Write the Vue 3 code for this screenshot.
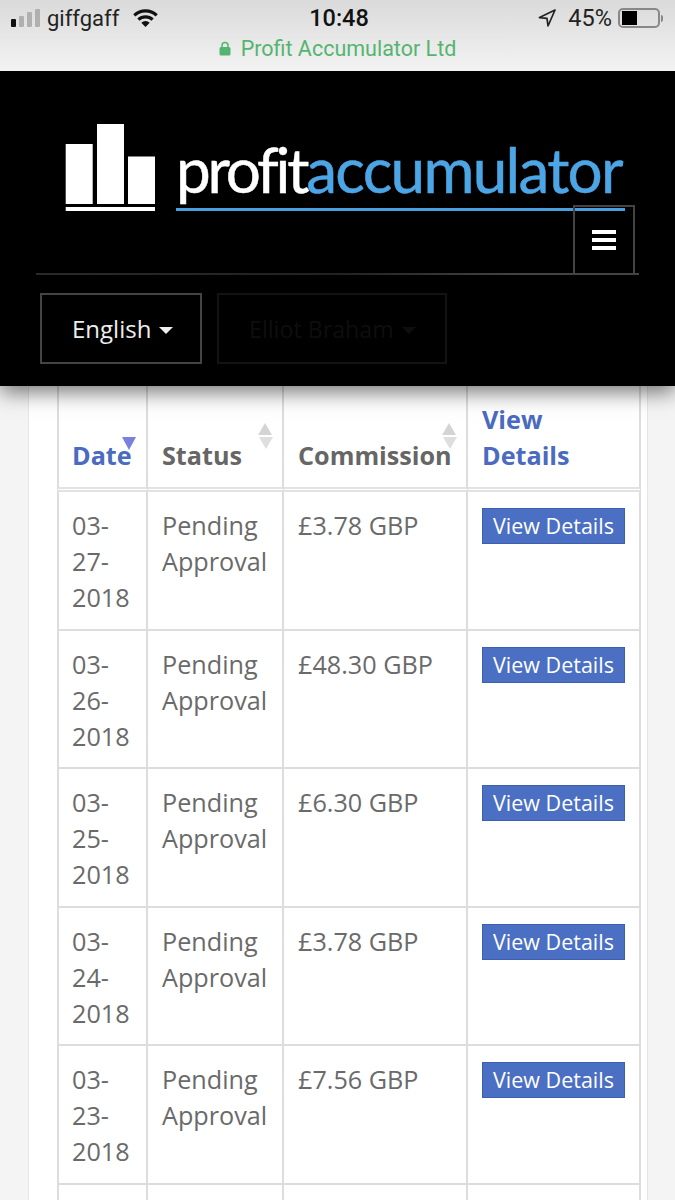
<script setup>
const rows = [
  { date: ['03-', '27-', '2018'], amount: '£3.78 GBP' },
  { date: ['03-', '26-', '2018'], amount: '£48.30 GBP' },
  { date: ['03-', '25-', '2018'], amount: '£6.30 GBP' },
  { date: ['03-', '24-', '2018'], amount: '£3.78 GBP' },
  { date: ['03-', '23-', '2018'], amount: '£7.56 GBP' }
];
</script>

<template>
  <div class="page">
    <div class="ios-bar">
      <div class="status">
        <div class="status-left">
          <span class="signal">
            <i class="on b1"></i>
            <i class="b2"></i>
            <i class="b3"></i>
            <i class="b4"></i>
          </span>
          <span class="carrier">giffgaff</span>
          <svg class="wifi" width="25" height="18" viewBox="0 0 25 18">
            <path d="M1.300 6.300A16.500 16.500 0 0 1 23.700 6.300" fill="none" stroke="#111" stroke-width="3.200" />
            <path d="M5.400 10.700A10.300 10.300 0 0 1 19.600 10.700" fill="none" stroke="#111" stroke-width="3.200" />
            <path d="M12.500 18 8.300 13.800A6 6 0 0 1 16.700 13.800z" fill="#111" />
          </svg>
        </div>
        <div class="clock">10:48</div>
        <div class="status-right">
          <svg class="arrow" width="18" height="18" viewBox="0 0 18 18">
            <path d="M17 1 1.500 8.600 9 9.400 10 17z" fill="none" stroke="#222" stroke-width="1.700" stroke-linejoin="round" />
          </svg>
          <span class="pct">45%</span>
          <span class="battery"><i></i></span>
          <span class="nub"></span>
        </div>
      </div>
      <div class="site">
        <svg width="12" height="15" viewBox="0 0 12 15">
          <path d="M3 7V4.500a3 3 0 0 1 6 0V7" fill="none" stroke="#55b570" stroke-width="1.500" />
          <rect x="0.500" y="6" width="11" height="8.500" rx="1.500" fill="#55b570" />
        </svg>
        <span>Profit Accumulator Ltd</span>
      </div>
    </div>

    <header class="top">
      <div class="logo">
        <svg class="bars" width="92" height="90" viewBox="0 0 92 90">
          <rect x="0.700" y="21" width="27" height="60" fill="#fff" />
          <rect x="32" y="1" width="27" height="80" fill="#fff" />
          <rect x="63" y="33.500" width="27" height="47.500" fill="#fff" />
          <rect x="0.700" y="84" width="89.300" height="4" fill="#fff" />
        </svg>
        <div class="wordmark">
          <div class="word"><span class="w1">profit</span><span class="w2">accumulator</span></div>
          <div class="underline"></div>
        </div>
      </div>
      <button class="burger" aria-label="Menu"><i></i><i></i><i></i></button>
      <div class="rule"></div>
      <div class="menus">
        <div class="menu lang">English <span class="caret"></span></div>
        <div class="menu user">Elliot Braham <span class="caret dark"></span></div>
      </div>
    </header>

    <main class="content">
      <div class="card">
        <table>
          <colgroup>
            <col class="c1" />
            <col class="c2" />
            <col class="c3" />
            <col class="c4" />
          </colgroup>
          <thead>
            <tr>
              <th class="active">Date<span class="sort-down"></span></th>
              <th>Status<span class="sort"></span></th>
              <th>Commission<span class="sort"></span></th>
              <th class="active wrap">View Details</th>
            </tr>
          </thead>
          <tbody>
            <tr v-for="row in rows" :key="row.date.join('')">
              <td><div v-for="part in row.date" :key="part">{{ part }}</div></td>
              <td>Pending Approval</td>
              <td>{{ row.amount }}</td>
              <td><a class="btn">View Details</a></td>
            </tr>
            <tr class="cut">
              <td></td><td></td><td></td><td></td>
            </tr>
          </tbody>
        </table>
      </div>
    </main>
  </div>
</template>

<style>
html, body {
  margin: 0;
  background: #f4f4f4;
}
</style>

<style scoped>
.page {
  width: 675px;
  height: 1200px;
  overflow: hidden;
  font-family: 'Open Sans', sans-serif;
  background: #f4f4f4;
}

.ios-bar {
  position: relative;
  z-index: 3;
  height: 71px;
  box-sizing: border-box;
  background: linear-gradient(#dadada, #f3f3f3);
  font-family: Roboto, 'Liberation Sans', sans-serif;
}

.status {
  display: grid;
  grid-template-columns: 1fr auto 1fr;
  align-items: center;
  height: 36px;
  padding: 0 12px 0 11px;
}

.status-left, .status-right {
  display: flex;
  align-items: center;
}

.status-right {
  justify-content: flex-end;
}

.signal {
  display: flex;
  align-items: flex-end;
  gap: 3px;
  height: 18px;
  margin-right: 7px;
}

.signal i {
  width: 5px;
  border-radius: 1px;
  background: #b0b0b0;
}

.signal i.on {
  background: #111;
}

.b1 { height: 8px; }
.b2 { height: 11px; }
.b3 { height: 15px; }
.b4 { height: 18px; }

.carrier {
  font-size: 22px;
  color: #222;
  margin-right: 14px;
}

.clock {
  padding-left: 4px;
  font-size: 23.5px;
  font-weight: 500;
  color: #111;
}

.arrow {
  margin-right: 12px;
}

.pct {
  font-size: 23.5px;
  color: #222;
  margin-right: 6px;
}

.battery {
  display: block;
  width: 42px;
  height: 20px;
  box-sizing: border-box;
  border: 2px solid #888;
  border-radius: 5px;
  padding: 1px 2px;
}

.battery i {
  display: block;
  width: 15px;
  height: 14px;
  background: #000;
}

.nub {
  width: 2px;
  height: 7px;
  margin-left: 1px;
  background: #888;
  border-radius: 0 2px 2px 0;
}

.site {
  display: flex;
  justify-content: center;
  align-items: center;
  gap: 10px;
  font-size: 21.5px;
  color: #55b570;
}

.top {
  position: relative;
  z-index: 2;
  height: 315px;
  box-sizing: border-box;
  padding: 52px 36px 0 40px;
  background: #000;
  box-shadow: 0 6px 20px rgba(0, 0, 0, 0.55);
}

.logo {
  display: flex;
  align-items: flex-start;
  margin-left: 25px;
}

.wordmark {
  margin-left: 19px;
  margin-top: 15px;
  width: 449px;
}

.word {
  font-family: Lato, sans-serif;
  font-size: 62px;
  line-height: 62px;
  white-space: nowrap;
  font-variant-ligatures: none;
  -webkit-text-stroke: 0.5px currentColor;
}

.w1 {
  color: #fff;
  letter-spacing: -3.2px;
}

.w2 {
  color: #4ca6e6;
  letter-spacing: -1.7px;
}

.underline {
  height: 3px;
  margin-top: 8px;
  background: #4a9fdf;
}

.burger {
  position: absolute;
  left: 573px;
  top: 134px;
  width: 62px;
  height: 70px;
  box-sizing: border-box;
  padding: 0;
  border: 2px solid #444;
  background: transparent;
  display: flex;
  flex-direction: column;
  align-items: center;
  justify-content: center;
  gap: 4px;
}

.burger i {
  display: block;
  width: 24px;
  height: 4px;
  background: #fff;
}

.rule {
  height: 2px;
  margin: 60px 0 0 -4px;
  background: linear-gradient(90deg, #2a2a2a, #222 50%, #444 80%);
}

.menus {
  display: flex;
  gap: 15px;
  margin-top: 18px;
}

.menu {
  height: 71px;
  box-sizing: border-box;
  display: flex;
  align-items: center;
  gap: 8px;
  font-size: 24px;
  border: 2px solid #444;
}

.lang {
  width: 162px;
  padding-left: 30px;
  color: #eee;
}

.user {
  width: 230px;
  padding-left: 30px;
  font-size: 23.2px;
  color: #0e0e0e;
  border-color: #131313;
}

.caret {
  width: 0;
  height: 0;
  margin-top: 4px;
  border-left: 7px solid transparent;
  border-right: 7px solid transparent;
  border-top: 7px solid #eee;
}

.caret.dark {
  border-top-color: #0e0e0e;
}

.content {
  padding-left: 28px;
}

.card {
  width: 620px;
  box-sizing: border-box;
  height: 900px;
  padding-left: 28px;
  background: #fff;
  border-left: 1px solid #e6e6e6;
  border-right: 1px solid #e6e6e6;
}

table {
  width: 584px;
  table-layout: fixed;
  border-collapse: separate;
  border-spacing: 0;
  color: #6a6a6a;
  font-size: 25.2px;
  line-height: 36px;
}

.c1 { width: 91px; }
.c2 { width: 136px; }
.c3 { width: 184px; }
.c4 { width: 173px; }

th, td {
  box-sizing: border-box;
  padding: 15px 14px 13.5px;
  text-align: left;
  vertical-align: top;
  border-right: 2px solid #ddd;
  border-bottom: 2px solid #ddd;
}

th:first-child, td:first-child {
  border-left: 2px solid #ddd;
  padding-left: 13px;
}

th {
  position: relative;
  height: 106px;
  padding: 15px 0 14px 14px;
  vertical-align: bottom;
  font-size: 25.2px;
  font-weight: 700;
  color: #666;
  border-bottom: 5px double #e2e2e2;
}

th.wrap {
  padding-right: 15px;
}

th.active {
  color: #4a6bc0;
}

.sort, .sort::after {
  position: absolute;
  width: 0;
  height: 0;
  border-left: 7.500px solid transparent;
  border-right: 7.500px solid transparent;
}

.sort {
  top: 37px;
  right: 10px;
  border-bottom: 12px solid #d4d4d4;
}

.sort::after {
  content: '';
  right: -7.500px;
  top: 14px;
  border-top: 12px solid #dedede;
}

.sort-down {
  position: absolute;
  left: 63px;
  top: 51px;
  width: 0;
  height: 0;
  border-left: 7px solid transparent;
  border-right: 7px solid transparent;
  border-top: 13px solid #7a80e0;
}

.btn {
  display: block;
  height: 36px;
  margin-top: 1px;
  box-sizing: border-box;
  width: 143px;
  border: 1px solid #3d5fae;
  background: #4a6fc3;
  color: #fff;
  font-size: 21.5px;
  line-height: 34px;
  text-align: center;
  white-space: nowrap;
}

.cut td {
  height: 40px;
  border-bottom: 0;
}
</style>
